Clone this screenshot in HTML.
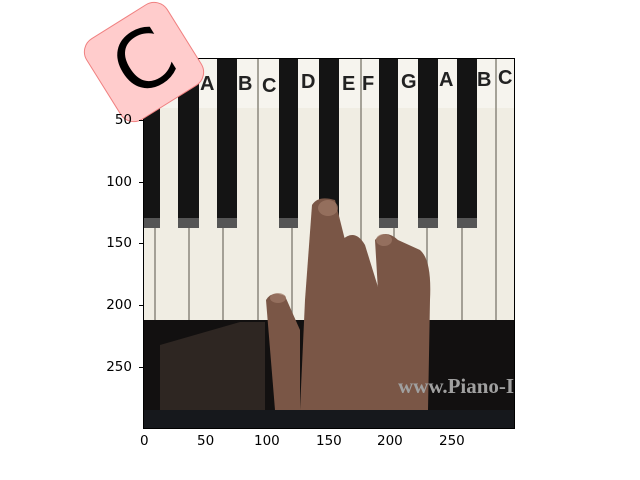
<!DOCTYPE html>
<html><head><style>
body{margin:0;width:640px;height:480px;background:#fff;position:relative;overflow:hidden;font-family:"DejaVu Sans","Liberation Sans",sans-serif;}
.a{position:absolute}
.t{position:absolute;font-size:13.5px;color:#000;line-height:16px}
</style></head><body>
<div class="a" style="left:143px;top:58px;width:371px;height:370px;overflow:hidden;background:#ece8dc">
<svg width="371" height="370" viewBox="143 58 371 370" style="position:absolute;left:0;top:0">
<rect x="143" y="58" width="371" height="262" fill="#f0ede3"/>
<rect x="143" y="58" width="371" height="50" fill="#f6f4ee"/>
<g stroke="#8a877c" stroke-width="1.5">
<line x1="155" y1="58" x2="155" y2="320"/><line x1="189" y1="58" x2="189" y2="320"/><line x1="223" y1="58" x2="223" y2="320"/><line x1="258" y1="58" x2="258" y2="320"/><line x1="292" y1="58" x2="292" y2="320"/><line x1="327" y1="58" x2="327" y2="320"/><line x1="361" y1="58" x2="361" y2="320"/><line x1="394" y1="58" x2="394" y2="320"/><line x1="427" y1="58" x2="427" y2="320"/><line x1="462" y1="58" x2="462" y2="320"/><line x1="496" y1="58" x2="496" y2="320"/>
</g>
<g fill="#141414">
<rect x="143" y="58" width="17" height="170"/><rect x="178" y="58" width="21" height="170"/><rect x="217" y="58" width="20" height="170"/><rect x="279" y="58" width="19" height="170"/><rect x="319" y="58" width="20" height="170"/><rect x="379" y="58" width="19" height="170"/><rect x="418" y="58" width="20" height="170"/><rect x="457" y="58" width="20" height="170"/>
</g>
<g fill="#555"><rect x="143" y="218" width="17" height="10"/><rect x="178" y="218" width="21" height="10"/><rect x="217" y="218" width="20" height="10"/><rect x="279" y="218" width="19" height="10"/><rect x="379" y="218" width="19" height="10"/><rect x="418" y="218" width="20" height="10"/><rect x="457" y="218" width="20" height="10"/></g>
<rect x="143" y="320" width="371" height="90" fill="#121010"/>
<polygon points="160,345 240,322 265,322 265,410 160,410" fill="#2e2622"/>
<rect x="143" y="410" width="371" height="18" fill="#16181c"/>
<g fill="#7a5646">
<path d="M266,300 Q272,290 285,296 L300,330 L300,410 L275,410 Z"/>
<path d="M312,205 Q318,195 335,200 L345,240 L350,410 L300,410 L305,300 Z"/>
<path d="M342,240 Q355,228 365,245 L382,300 L390,410 L345,410 Z"/>
<path d="M375,240 Q385,228 398,240 L420,250 Q432,260 430,300 L428,410 L385,410 Z"/>
</g>
<g fill="#a07a68" opacity=".7"><ellipse cx="328" cy="208" rx="10" ry="8"/><ellipse cx="384" cy="240" rx="8" ry="6"/><ellipse cx="278" cy="298" rx="8" ry="5"/></g>
<text x="398" y="393" font-family="Liberation Serif" font-weight="bold" font-size="21" fill="#a0a0a0">www.Piano-I</text>
<g font-family="Liberation Sans" font-weight="bold" font-size="20" fill="#222">
<text x="200" y="90">A</text><text x="238" y="90">B</text><text x="262" y="92">C</text><text x="301" y="88">D</text><text x="342" y="90">E</text><text x="362" y="90">F</text><text x="401" y="88">G</text><text x="439" y="86">A</text><text x="477" y="86">B</text><text x="498" y="84">C</text>
</g>
</svg>
</div>
<div class="a" style="left:143px;top:58px;width:370px;height:369px;border:1px solid #000"></div>
<div class="a" style="left:96px;top:14px;width:94px;height:94px;background:#ffcccc;border:1px solid #f08080;border-radius:16px;transform:rotate(-32deg);display:flex;align-items:center;justify-content:center;font-family:'DejaVu Sans',sans-serif;font-weight:normal;font-size:80px;line-height:94px;color:#000">C</div>
<div class="t" style="right:508px;top:112px">50</div>
<div class="t" style="right:508px;top:174px">100</div>
<div class="t" style="right:508px;top:235px">150</div>
<div class="t" style="right:508px;top:297px">200</div>
<div class="t" style="right:508px;top:359px">250</div>
<div class="a" style="left:139px;top:120px;width:4px;height:1px;background:#000"></div>
<div class="a" style="left:139px;top:182px;width:4px;height:1px;background:#000"></div>
<div class="a" style="left:139px;top:243px;width:4px;height:1px;background:#000"></div>
<div class="a" style="left:139px;top:305px;width:4px;height:1px;background:#000"></div>
<div class="a" style="left:139px;top:367px;width:4px;height:1px;background:#000"></div>
<div class="t" style="left:140px;top:433px">0</div>
<div class="t" style="left:197px;top:433px">50</div>
<div class="t" style="left:254px;top:433px">100</div>
<div class="t" style="left:316px;top:433px">150</div>
<div class="t" style="left:377px;top:433px">200</div>
<div class="t" style="left:439px;top:433px">250</div>
</body></html>
